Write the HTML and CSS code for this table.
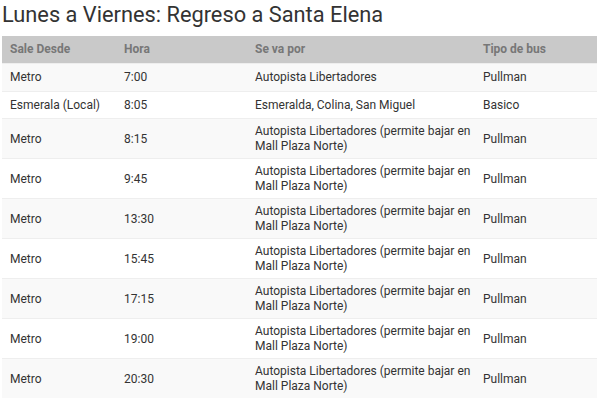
FILE: index.html
```html
<!DOCTYPE html>
<html lang="es">
<head>
<meta charset="utf-8">
<link rel="stylesheet" href="styles.css">
</head>
<body>
<h2 class="title">Lunes a Viernes: Regreso a Santa Elena</h2>
<table class="schedule">
  <colgroup>
    <col class="c1"><col class="c2"><col class="c3"><col class="c4">
  </colgroup>
  <thead>
    <tr><th>Sale Desde</th><th>Hora</th><th>Se va por</th><th>Tipo de bus</th></tr>
  </thead>
  <tbody>
    <tr><td>Metro</td><td>7:00</td><td>Autopista Libertadores</td><td>Pullman</td></tr>
    <tr><td>Esmerala (Local)</td><td>8:05</td><td>Esmeralda, Colina, San Miguel</td><td>Basico</td></tr>
    <tr><td>Metro</td><td>8:15</td><td>Autopista Libertadores (permite bajar en Mall Plaza Norte)</td><td>Pullman</td></tr>
    <tr><td>Metro</td><td>9:45</td><td>Autopista Libertadores (permite bajar en Mall Plaza Norte)</td><td>Pullman</td></tr>
    <tr><td>Metro</td><td>13:30</td><td>Autopista Libertadores (permite bajar en Mall Plaza Norte)</td><td>Pullman</td></tr>
    <tr><td>Metro</td><td>15:45</td><td>Autopista Libertadores (permite bajar en Mall Plaza Norte)</td><td>Pullman</td></tr>
    <tr><td>Metro</td><td>17:15</td><td>Autopista Libertadores (permite bajar en Mall Plaza Norte)</td><td>Pullman</td></tr>
    <tr><td>Metro</td><td>19:00</td><td>Autopista Libertadores (permite bajar en Mall Plaza Norte)</td><td>Pullman</td></tr>
    <tr><td>Metro</td><td>20:30</td><td>Autopista Libertadores (permite bajar en Mall Plaza Norte)</td><td>Pullman</td></tr>
  </tbody>
</table>
</body>
</html>
```
FILE: styles.css
```css
html, body {
  margin: 0;
  padding: 0;
  background: #fff;
}
body {
  font-family: Roboto, "Liberation Sans", sans-serif;
  color: #333;
  padding: 0 2px;
}
.title {
  margin: 0;
  padding-top: 2px;
  height: 34px;
  font-size: 21.8px;
  font-weight: 400;
  line-height: 26px;
  color: #333;
}
.schedule {
  width: 595px;
  border-collapse: collapse;
  table-layout: fixed;
  font-size: 12px;
  line-height: 15px;
}
.c1 { width: 114px; }
.c2 { width: 131px; }
.c3 { width: 228px; }
.c4 { width: 122px; }
.schedule th {
  background: #c9c9c9;
  color: #777;
  font-weight: 700;
  text-align: left;
  padding: 6px 8px;
}
.schedule tbody tr {
  height: 27.5px;
}
.schedule td {
  padding: 5px 2px 4px 8px;
  vertical-align: middle;
  border-top: 1px solid #eee;
}
.schedule tbody tr:nth-child(odd) td {
  background: #f9f9f9;
}
```
